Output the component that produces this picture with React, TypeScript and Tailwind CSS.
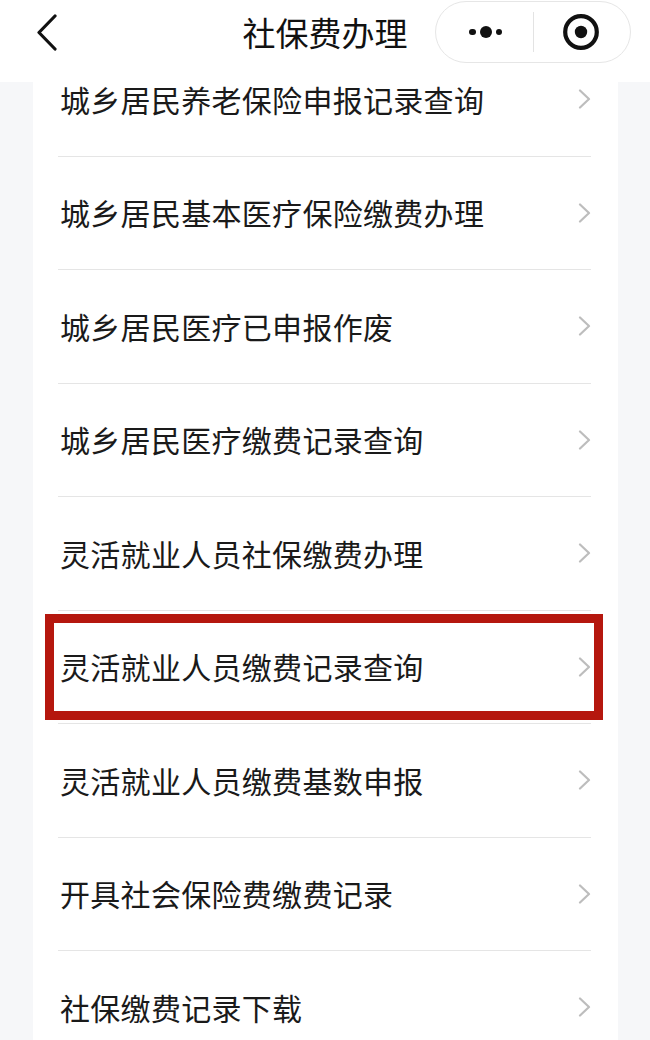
const items = [
  "城乡居民养老保险申报记录查询",
  "城乡居民基本医疗保险缴费办理",
  "城乡居民医疗已申报作废",
  "城乡居民医疗缴费记录查询",
  "灵活就业人员社保缴费办理",
  "灵活就业人员缴费记录查询",
  "灵活就业人员缴费基数申报",
  "开具社会保险费缴费记录",
  "社保缴费记录下载",
];

const font = { fontFamily: '"Noto Sans CJK SC", "Noto Sans", sans-serif' };

function Chevron() {
  return (
    <svg width="13" height="20" viewBox="0 0 13 20" fill="none">
      <path d="M2 1.5 L11 10 L2 18.5" stroke="#bdbdbd" strokeWidth="2.2" strokeLinecap="round" strokeLinejoin="round" />
    </svg>
  );
}

function Header() {
  return (
    <div className="absolute top-0 left-0 right-0 h-[82px] bg-white z-10">
      <svg className="absolute left-[35px] top-[14px]" width="24" height="38" viewBox="0 0 24 38" fill="none">
        <path d="M20 2 L4 18.5 L20 35" stroke="#111" strokeWidth="3.2" strokeLinecap="round" strokeLinejoin="round" />
      </svg>
      <div className="absolute left-0 right-0 top-[10px] text-center text-[33px] leading-[44px] text-[#111]">
        社保费办理
      </div>
      <div className="absolute left-[435px] top-[1px] w-[196px] h-[62px] rounded-full border border-[#e6e6e6] flex items-center">
        <div className="w-[97px] flex items-center justify-center gap-[4px] pl-[2px]">
          <span className="w-[6.5px] h-[6.5px] rounded-full bg-[#111]" />
          <span className="w-[12px] h-[12px] rounded-full bg-[#111]" />
          <span className="w-[6.5px] h-[6.5px] rounded-full bg-[#111]" />
        </div>
        <div className="w-px h-[40px] bg-[#e3e3e3]" />
        <div className="flex-1 flex items-center justify-center pr-[2px]">
          <svg width="38" height="38" viewBox="0 0 38 38" fill="none">
            <circle cx="19" cy="19" r="15.8" stroke="#111" strokeWidth="4.2" />
            <circle cx="19" cy="19" r="6.2" fill="#111" />
          </svg>
        </div>
      </div>
    </div>
  );
}

export default function App() {
  return (
    <div className="relative w-[650px] h-[1040px] overflow-hidden bg-[#f6f7f9]" style={font}>
      <Header />
      <div className="ml-[33px] w-[585px] bg-white pt-[43px] pb-[40px]">
        {items.map((text, i) => (
          <div
            key={text}
            className="relative ml-[25px] mr-[27px] h-[113.5px] flex items-center justify-between border-b border-[#e5e5e5]"
          >
            <span className="text-[30px] text-[#1a1a1a] pl-[2px] tracking-[0.3px]">{text}</span>
            <Chevron />
            {i === 5 && (
              <div className="absolute -left-[13px] -right-[12px] top-[3.5px] bottom-[3px] border-[9px] border-[#b5170e]" />
            )}
          </div>
        ))}
      </div>
    </div>
  );
}
